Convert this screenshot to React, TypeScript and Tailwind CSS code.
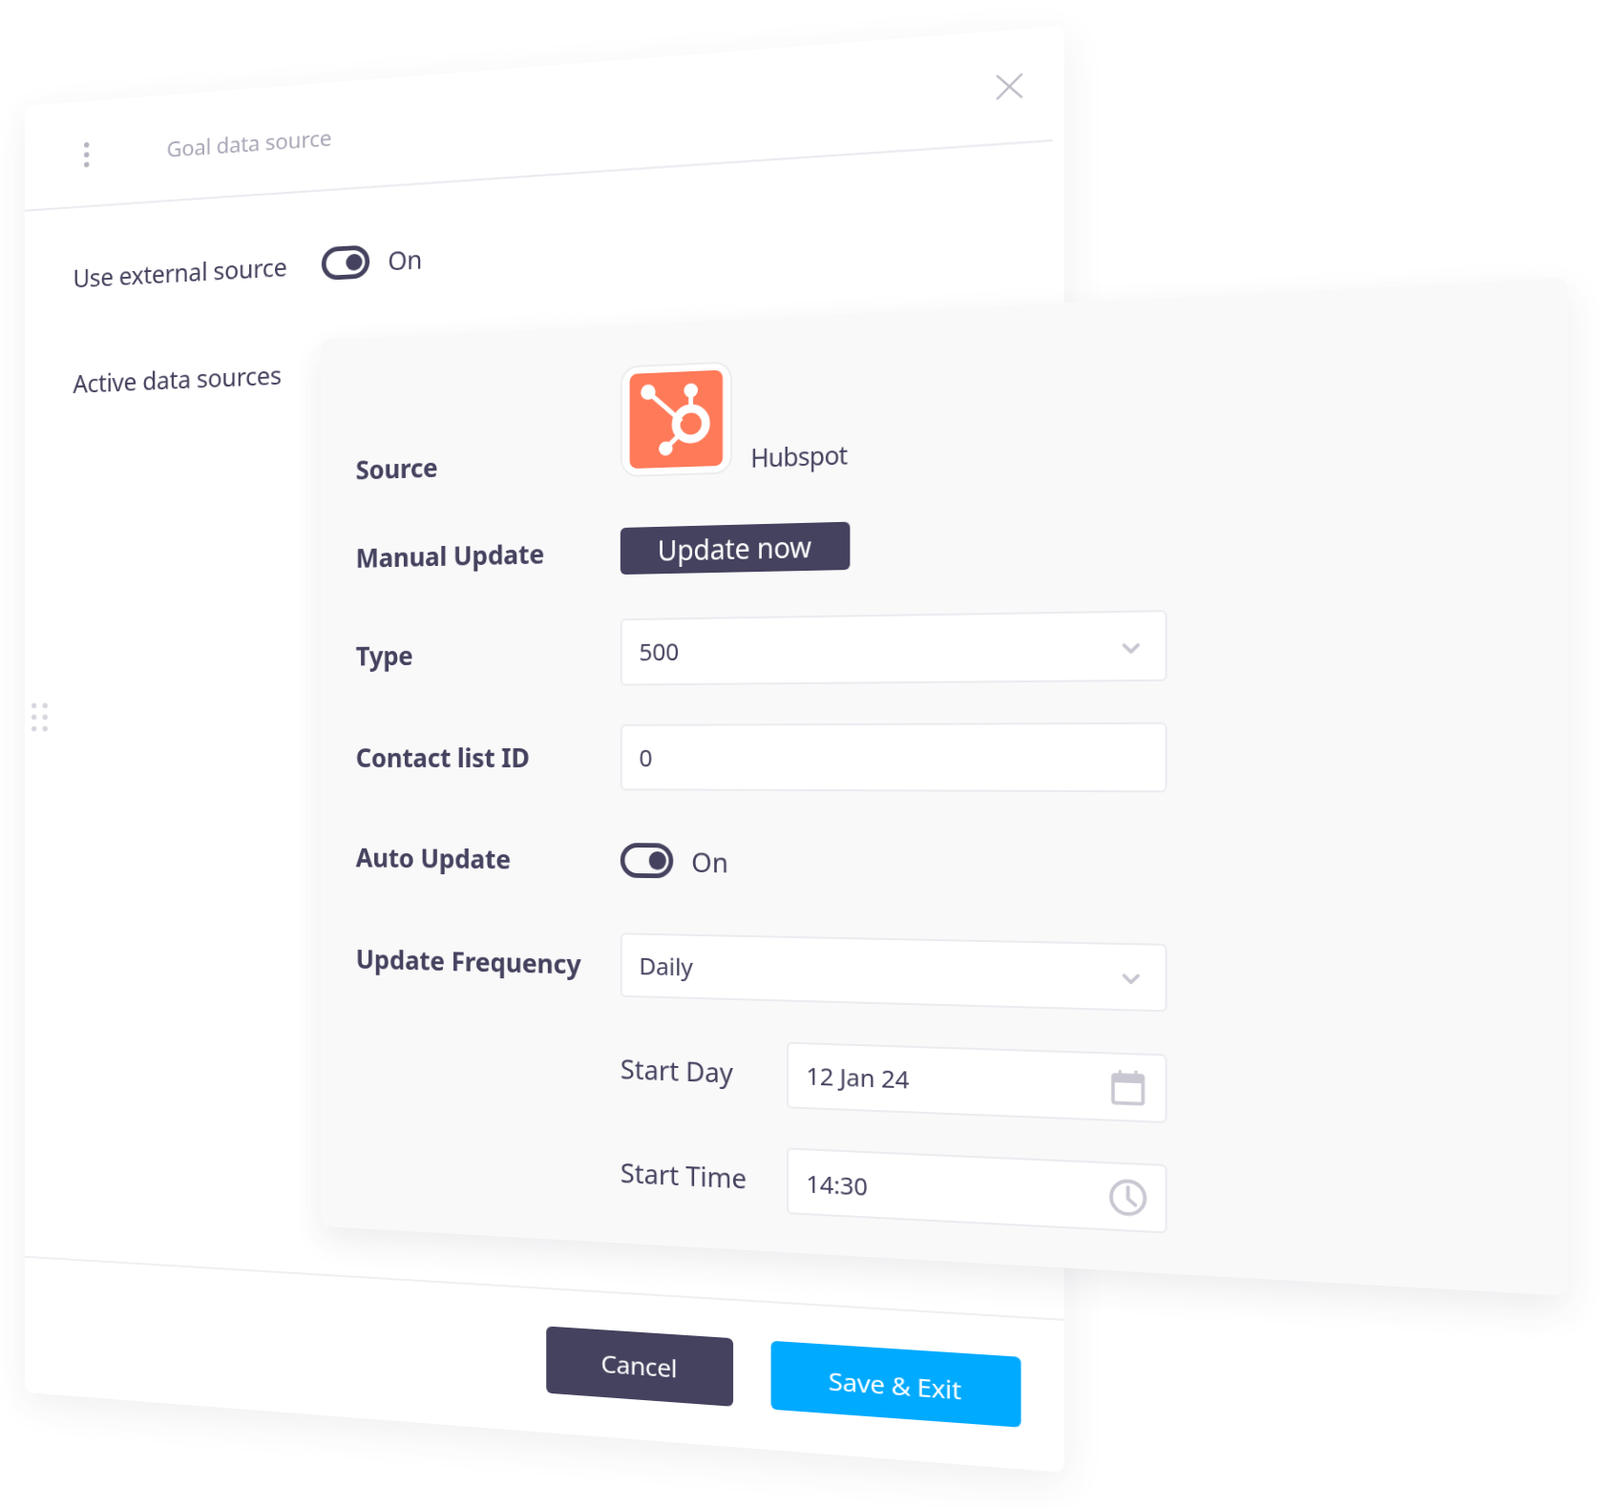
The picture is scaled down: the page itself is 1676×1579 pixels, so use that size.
import React from 'react';
import { ChevronDown, X } from 'lucide-react';

type Point = [number, number];

// rectangle of w x h onto a quad given as TL, TR, BR, BL in page pixels
function quadMatrix(w: number, h: number, [p0, p1, p2, p3]: Point[]) {
  const dx1 = p1[0] - p2[0];
  const dx2 = p3[0] - p2[0];
  const dx3 = p0[0] - p1[0] + p2[0] - p3[0];
  const dy1 = p1[1] - p2[1];
  const dy2 = p3[1] - p2[1];
  const dy3 = p0[1] - p1[1] + p2[1] - p3[1];
  const den = dx1 * dy2 - dx2 * dy1;
  const g = (dx3 * dy2 - dx2 * dy3) / den;
  const k = (dx1 * dy3 - dx3 * dy1) / den;
  const a = p1[0] - p0[0] + g * p1[0];
  const b = p3[0] - p0[0] + k * p3[0];
  const d = p1[1] - p0[1] + g * p1[1];
  const e = p3[1] - p0[1] + k * p3[1];
  const m = [a / w, d / w, 0, g / w, b / h, e / h, 0, k / h, 0, 0, 1, 0, p0[0], p0[1], 0, 1];
  return `matrix3d(${m.join(',')})`;
}

const backQuad: Point[] = [[26, 111], [1115, 27], [1115, 1543], [26, 1459]];
const frontQuad: Point[] = [[336, 356], [1642, 291], [1642, 1358], [336, 1285]];

function Toggle({ className }: { className: string }) {
  return (
    <div className={`flex items-center justify-end rounded-full border-[5px] border-[#44425e] ${className}`}>
      <div className="mr-[3px] h-[68%] aspect-square rounded-full bg-[#44425e]" />
    </div>
  );
}

function HubspotLogo() {
  return (
    <svg viewBox="0 0 100 100" className="h-full w-full">
      <rect width="100" height="100" rx="8" fill="#ff7a59" />
      <g stroke="#fff" strokeWidth="5" fill="none">
        <line x1="20" y1="20" x2="56" y2="52" />
        <line x1="66" y1="20" x2="66" y2="40" />
        <line x1="39" y1="80" x2="54" y2="66" />
        <circle cx="66" cy="55" r="16" strokeWidth="9" />
      </g>
      <circle cx="20" cy="20" r="8" fill="#fff" />
      <circle cx="66" cy="20" r="7.5" fill="#fff" />
      <circle cx="39" cy="80" r="7.5" fill="#fff" />
    </svg>
  );
}

function Field({ value, className, children }: { value: string; className: string; children?: React.ReactNode }) {
  return (
    <div className={`flex items-center justify-between rounded-[6px] border-2 border-[#ebebf0] bg-white pl-[19px] pr-[20px] text-[26px] tracking-[-0.005em] text-[#44425e] ${className}`}>
      <span>{value}</span>
      {children}
    </div>
  );
}

function FormLabel({ children }: { children: React.ReactNode }) {
  return <div className="w-[306px] shrink-0 text-[29px] font-bold tracking-[-0.005em] text-[#44425e]">{children}</div>;
}

function BackPanel() {
  return (
    <div
      className="absolute left-0 top-0 flex h-[1450px] w-[1100px] origin-top-left flex-col rounded-[10px] bg-white shadow-[0_12px_40px_rgba(60,60,90,0.08)]"
      style={{ transform: quadMatrix(1100, 1450, backQuad) }}
    >
      <div className="mr-[11px] flex h-[117px] items-center pt-[3px]">
        <div className="ml-[70px] flex w-[96px] flex-col gap-[5px]">
          <span className="h-[6px] w-[6px] rounded-full bg-[#b5b5c2]" />
          <span className="h-[6px] w-[6px] rounded-full bg-[#b5b5c2]" />
          <span className="h-[6px] w-[6px] rounded-full bg-[#b5b5c2]" />
        </div>
        <span className="text-[24px] tracking-[-0.01em] text-[#a9a8b7]">Goal data source</span>
        <X className="relative top-[-3px] ml-auto mr-[18px] h-[46px] w-[46px] text-[#b9b9c4]" strokeWidth={1.1} />
      </div>
      <div className="mr-[11px] h-[2px] origin-left rotate-[-0.2deg] bg-[#e9e9ef]" />
      <div className="relative flex-1 pl-[57px] text-[27px] tracking-[-0.01em] text-[#44425e]">
        <div className="mt-[57px] flex h-[44px] items-center">
          <span className="w-[284px]">Use external source</span>
          <Toggle className="relative top-[-1px] h-[36px] w-[53px]" />
          <span className="ml-[20px]">On</span>
        </div>
        <div className="mt-[76px]">Active data sources</div>
        <div className="absolute left-[8px] top-[554px] grid grid-cols-2 gap-x-[7px] gap-y-[7px]">
          {[0, 1, 2, 3, 4, 5].map(i => (
            <span key={i} className="h-[6px] w-[6px] rounded-full bg-[#d6d6de]" />
          ))}
        </div>
      </div>
      <div className="flex h-[154px] items-center justify-end gap-[38px] border-t-2 border-[#efeff3] pb-[3px] pr-[41px] text-[26px] tracking-[-0.015em] text-white">
        <div className="flex h-[71px] w-[193px] items-center justify-center rounded-[6px] bg-[#44425e]">Cancel</div>
        <div className="flex h-[71px] w-[244px] items-center justify-center rounded-[6px] bg-[#00aaff] pt-[4px]">Save &amp; Exit</div>
      </div>
    </div>
  );
}

function FrontPanel() {
  return (
    <div
      className="absolute left-0 top-0 h-[1000px] w-[1306px] origin-top-left rounded-[10px] bg-[#f9f9fa] pl-[42px] pt-[45px] shadow-[0_14px_36px_rgba(50,50,80,0.09)]"
      style={{ transform: quadMatrix(1306, 1000, frontQuad) }}
    >
      <div className="flex h-[121px] items-end">
        <div className="mb-[-5px]"><FormLabel><span className="relative top-[-2px]">Source</span></FormLabel></div>
        <div className="h-[121px] w-[124px] shrink-0 rounded-[20px] border-2 border-[#ececf0] bg-white p-[7px]">
          <HubspotLogo />
        </div>
        <span className="mb-[-4px] ml-[20px] text-[27px] tracking-[-0.025em] text-[#44425e]">Hubspot</span>
      </div>
      <div className="mt-[55px] flex h-[51px] items-center">
        <FormLabel>Manual Update</FormLabel>
        <div className="flex h-[51px] w-[251px] items-center justify-center rounded-[6px] bg-[#44425e] text-[30px] tracking-[-0.01em] text-white">Update now</div>
      </div>
      <div className="mt-[48px] flex h-[73px] items-center">
        <FormLabel>Type</FormLabel>
        <Field value="500" className="h-[73px] w-[577px]">
          <ChevronDown className="relative top-[2px] h-[28px] w-[28px] text-[#c6c6d0]" strokeWidth={3} />
        </Field>
      </div>
      <div className="mt-[42px] flex h-[72px] items-center">
        <FormLabel>Contact list ID</FormLabel>
        <Field value="0" className="h-[72px] w-[577px]" />
      </div>
      <div className="mt-[57px] flex h-[38px] items-center">
        <FormLabel>Auto Update</FormLabel>
        <Toggle className="h-[38px] w-[59px]" />
        <span className="relative top-[1px] ml-[20px] text-[29px] text-[#44425e]">On</span>
      </div>
      <div className="mt-[60px] flex h-[70px] items-center">
        <FormLabel>Update Frequency</FormLabel>
        <Field value="Daily" className="h-[70px] w-[577px]">
          <ChevronDown className="relative top-[2px] h-[28px] w-[28px] text-[#c6c6d0]" strokeWidth={3} />
        </Field>
      </div>
      <div className="mt-[43px] flex h-[71px] items-center pl-[306px]">
        <span className="relative top-[-1px] w-[183px] shrink-0 text-[29px] text-[#44425e]">Start Day</span>
        <Field value="12 Jan 24" className="h-[71px] w-[394px]">
          <svg viewBox="0 0 34 36" className="h-[36px] w-[34px] text-[#c9c8d2]" fill="none" stroke="currentColor">
            <rect x="2" y="5" width="30" height="29" rx="2" strokeWidth="3.5" />
            <rect x="2" y="5" width="30" height="8" fill="currentColor" strokeWidth="0" />
            <line x1="9" y1="0" x2="9" y2="6" strokeWidth="3" />
            <line x1="25" y1="0" x2="25" y2="6" strokeWidth="3" />
          </svg>
        </Field>
      </div>
      <div className="mt-[42px] flex h-[71px] items-center pl-[306px]">
        <span className="relative top-[-1px] w-[183px] shrink-0 text-[29px] text-[#44425e]">Start Time</span>
        <Field value="14:30" className="h-[71px] w-[394px] [&>span]:relative [&>span]:top-[2px]">
          <svg viewBox="0 0 36 36" className="mr-[-2px] h-[38px] w-[38px] text-[#c9c8d2]" fill="none" stroke="currentColor" strokeWidth="3.5">
            <circle cx="18" cy="18" r="16" />
            <path d="M18 8v11l7 6" strokeLinecap="round" strokeLinejoin="round" />
          </svg>
        </Field>
      </div>
    </div>
  );
}

export default function App() {
  return (
    <div className="relative h-[1579px] w-[1676px] overflow-hidden bg-white font-['Noto_Sans',sans-serif]">
      <BackPanel />
      <FrontPanel />
    </div>
  );
}
